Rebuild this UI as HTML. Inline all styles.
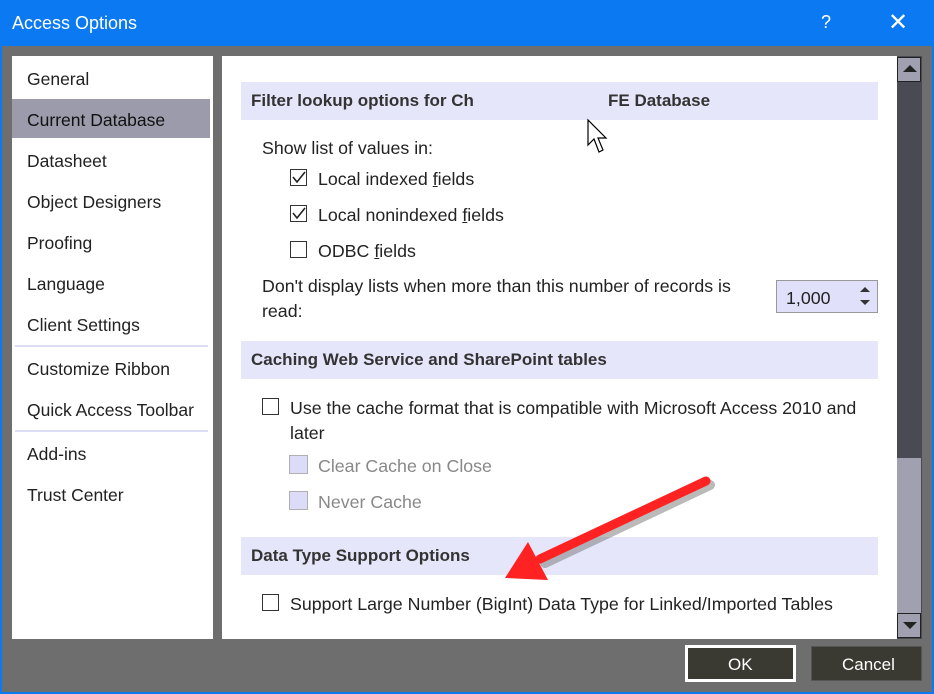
<!DOCTYPE html>
<html><head><style>
body{margin:0;width:934px;height:694px;overflow:hidden;background:#6e6e6e;font-family:"Liberation Sans",sans-serif;position:relative}
.a{position:absolute;white-space:nowrap}
.t{font-size:17.8px;color:#222}
.hd{position:absolute;left:241px;width:637px;height:38px;background:#e6e6fb}
.hd span{position:absolute;left:10px;top:9px;font-weight:bold;font-size:17px;color:#333;white-space:nowrap}
.cb{position:absolute;width:17px;height:17px;border:1px solid #333;background:#fff;box-sizing:border-box}
.cbd{position:absolute;width:19px;height:19px;border:1px solid #b0b0b0;background:#dcdcf8;box-sizing:border-box}
.sb{font-size:17.5px;color:#222;position:absolute;left:27px;white-space:nowrap}
</style></head><body>
<div class="a" style="left:0;top:0;width:934px;height:46px;background:#0b79f2"></div>
<div class="a" style="left:12px;top:13px;font-size:18px;color:#fff">Access Options</div>
<div class="a" style="left:821px;top:12px;font-size:18px;color:#fff">?</div>
<div class="a" style="left:888px;top:8px;font-size:24px;color:#fff">✕</div>
<div class="a" style="left:0;top:46px;width:2px;height:648px;background:#0b79f2"></div>
<div class="a" style="left:932px;top:46px;width:2px;height:648px;background:#0b79f2"></div>
<div class="a" style="left:0;top:692px;width:934px;height:2px;background:#0b79f2"></div>

<div class="a" style="left:12px;top:56px;width:201px;height:583px;background:#fff"></div>
<div class="a" style="left:12px;top:99px;width:198px;height:39px;background:#9b9bab"></div>
<div class="sb" style="top:69px">General</div>
<div class="sb" style="top:110px;color:#111">Current Database</div>
<div class="sb" style="top:151px">Datasheet</div>
<div class="sb" style="top:192px">Object Designers</div>
<div class="sb" style="top:233px">Proofing</div>
<div class="sb" style="top:274px">Language</div>
<div class="sb" style="top:315px">Client Settings</div>
<div class="a" style="left:15px;top:345px;width:193px;height:2px;background:#dcdcf4"></div>
<div class="sb" style="top:359px">Customize Ribbon</div>
<div class="sb" style="top:400px">Quick Access Toolbar</div>
<div class="a" style="left:15px;top:430px;width:193px;height:2px;background:#dcdcf4"></div>
<div class="sb" style="top:444px">Add-ins</div>
<div class="sb" style="top:485px">Trust Center</div>

<div class="a" style="left:222px;top:56px;width:675px;height:583px;background:#fff"></div>
<div class="a" style="left:897px;top:56px;width:25px;height:583px;background:#4a4a55"></div>
<div class="a" style="left:897px;top:57px;width:24px;height:25px;background:#a0a0b0;border:1px solid #222;box-sizing:border-box"></div>
<div class="a" style="left:903px;top:65px;width:0;height:0;border-left:7px solid transparent;border-right:7px solid transparent;border-bottom:7px solid #222"></div>
<div class="a" style="left:897px;top:458px;width:24px;height:155px;background:#a0a0b0"></div>
<div class="a" style="left:897px;top:613px;width:24px;height:25px;background:#a0a0b0;border:1px solid #222;box-sizing:border-box"></div>
<div class="a" style="left:903px;top:622px;width:0;height:0;border-left:7px solid transparent;border-right:7px solid transparent;border-top:7px solid #222"></div>

<div class="hd" style="top:82px"><span>Filter lookup options for Ch</span><span style="left:367px">FE Database</span></div>
<div class="a t" style="left:262px;top:138px">Show list of values in:</div>
<div class="cb" style="left:290px;top:169px"></div>
<div class="a t" style="left:318px;top:169px">Local indexed <u>f</u>ields</div>
<div class="cb" style="left:290px;top:205px"></div>
<div class="a t" style="left:318px;top:205px">Local nonindexed <u>f</u>ields</div>
<div class="cb" style="left:290px;top:241px"></div>
<div class="a t" style="left:318px;top:241px">ODBC <u>f</u>ields</div>
<div class="a t" style="left:262px;top:276px">Don't display lists when more than this number of records is</div>
<div class="a t" style="left:262px;top:301px">read:</div>
<div class="a" style="left:776px;top:280px;width:102px;height:33px;background:#e0e0fb;border:1px solid #999;box-sizing:border-box"></div>
<div class="a t" style="left:786px;top:288px">1,000</div>
<div class="a" style="left:860px;top:287px;border-left:5px solid transparent;border-right:5px solid transparent;border-bottom:5px solid #333;width:0;height:0"></div>
<div class="a" style="left:860px;top:300px;border-left:5px solid transparent;border-right:5px solid transparent;border-top:5px solid #333;width:0;height:0"></div>

<div class="hd" style="top:341px"><span>Caching Web Service and SharePoint tables</span></div>
<div class="cb" style="left:262px;top:398px"></div>
<div class="a t" style="left:290px;top:398px">Use the cache format that is compatible with Microsoft Access 2010 and</div>
<div class="a t" style="left:290px;top:423px">later</div>
<div class="cbd" style="left:289px;top:455px"></div>
<div class="a t" style="left:318px;top:456px;color:#888">Clear Cache on Close</div>
<div class="cbd" style="left:289px;top:491px"></div>
<div class="a t" style="left:318px;top:492px;color:#888">Never Cache</div>

<div class="hd" style="top:537px"><span>Data Type Support Options</span></div>
<div class="cb" style="left:262px;top:594px"></div>
<div class="a t" style="left:290px;top:594px">Support Large Number (BigInt) Data Type for Linked/Imported Tables</div>

<svg class="a" style="left:0;top:0" width="934" height="694">
<path d="M293,177 L297,182 L305,172" fill="none" stroke="#222" stroke-width="1.6"/>
<path d="M293,213 L297,218 L305,208" fill="none" stroke="#222" stroke-width="1.6"/>
<line x1="710" y1="485" x2="545" y2="563" stroke="#777" stroke-width="10" stroke-linecap="round" opacity=".5"/>
<line x1="706" y1="481" x2="540" y2="559" stroke="#f22" stroke-width="9" stroke-linecap="round"/>
<polygon points="505,578 528,542 548,580" fill="#f22"/>
<path d="M588,120 L588,145 L594,139 L599,152 L603,150 L598,138 L606,138 Z" fill="#fff" stroke="#000" stroke-width="1.2"/>
</svg>

<div class="a" style="left:685px;top:645px;width:111px;height:37px;background:#3a3a32;border:3px solid #fff;box-sizing:border-box"></div>
<div class="a" style="left:728px;top:655px;font-size:17px;color:#fff">OK</div>
<div class="a" style="left:811px;top:646px;width:111px;height:35px;background:#3a3a32;border:1px solid #555;box-sizing:border-box"></div>
<div class="a" style="left:842px;top:655px;font-size:17px;color:#fff">Cancel</div>
</body></html>
